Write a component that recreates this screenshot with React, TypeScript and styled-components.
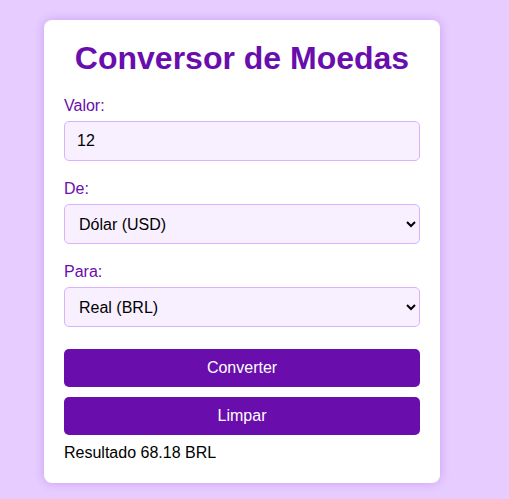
import styled, { createGlobalStyle } from "styled-components";
import { useState } from "react";

const GlobalStyle = createGlobalStyle`
  body {
    margin: 0;
    background-color: #e6ccff;
    font-family: "Liberation Sans", Arial, sans-serif;
  }
`

const Page = styled.div`
  padding: 20px 0 16px 44px;
`

const Card = styled.div`
  width: 396px;
  box-sizing: border-box;
  padding: 20px 20px 21px;
  background-color: #ffffff;
  border-radius: 8px;
  box-shadow: 0 0 10px rgba(140, 60, 220, 0.3);
`

const Title = styled.h1`
  margin: 0 0 20px;
  font-size: 32px;
  font-weight: 700;
  color: #6a0dad;
  text-align: center;
`

const Field = styled.div<{ $last?: boolean }>`
  display: flex;
  flex-direction: column;
  margin-bottom: ${p => p.$last ? "0" : "19px"};
`

const Label = styled.label`
  margin-bottom: 6px;
  font-size: 16px;
  color: #6a0dad;
`

const Input = styled.input`
  height: 40px;
  box-sizing: border-box;
  padding: 10px 12px;
  border: 1px solid #d6b3ff;
  border-radius: 5px;
  background-color: #f8f0ff;
  font-family: inherit;
  font-size: 16px;
  color: #000;
  outline: none;
`

const Select = styled.select`
  height: 40px;
  box-sizing: border-box;
  padding: 0 8px 0 10px;
  border: 1px solid #d6b3ff;
  border-radius: 5px;
  background-color: #f8f0ff;
  font-family: inherit;
  font-size: 16px;
  color: #000;
  outline: none;
`

const Actions = styled.div`
  display: flex;
  flex-direction: column;
  gap: 10px;
  margin-top: 22px;
`

const Button = styled.button`
  height: 38px;
  border: none;
  border-radius: 5px;
  background-color: #6a0dad;
  color: #fff;
  font-family: inherit;
  font-size: 16px;
  cursor: pointer;
`

const Result = styled.p`
  margin: 9px 0 0;
  font-size: 16px;
  color: #000;
`

export default function App() {
    const [valor, setValor] = useState("12")
    const [de, setDe] = useState("USD")
    const [para, setPara] = useState("BRL")

    return (
        <Page>
            <GlobalStyle/>
            <Card>
                <Title>Conversor de Moedas</Title>
                <Field>
                    <Label htmlFor="valor">Valor:</Label>
                    <Input id="valor" type="number" value={valor} onChange={e => setValor(e.target.value)}/>
                </Field>
                <Field>
                    <Label htmlFor="de">De:</Label>
                    <Select id="de" value={de} onChange={e => setDe(e.target.value)}>
                        <option value="USD">Dólar (USD)</option>
                        <option value="EUR">Euro (EUR)</option>
                        <option value="BRL">Real (BRL)</option>
                    </Select>
                </Field>
                <Field $last>
                    <Label htmlFor="para">Para:</Label>
                    <Select id="para" value={para} onChange={e => setPara(e.target.value)}>
                        <option value="USD">Dólar (USD)</option>
                        <option value="EUR">Euro (EUR)</option>
                        <option value="BRL">Real (BRL)</option>
                    </Select>
                </Field>
                <Actions>
                    <Button>Converter</Button>
                    <Button>Limpar</Button>
                </Actions>
                <Result>Resultado 68.18 BRL</Result>
            </Card>
        </Page>
    )
}
